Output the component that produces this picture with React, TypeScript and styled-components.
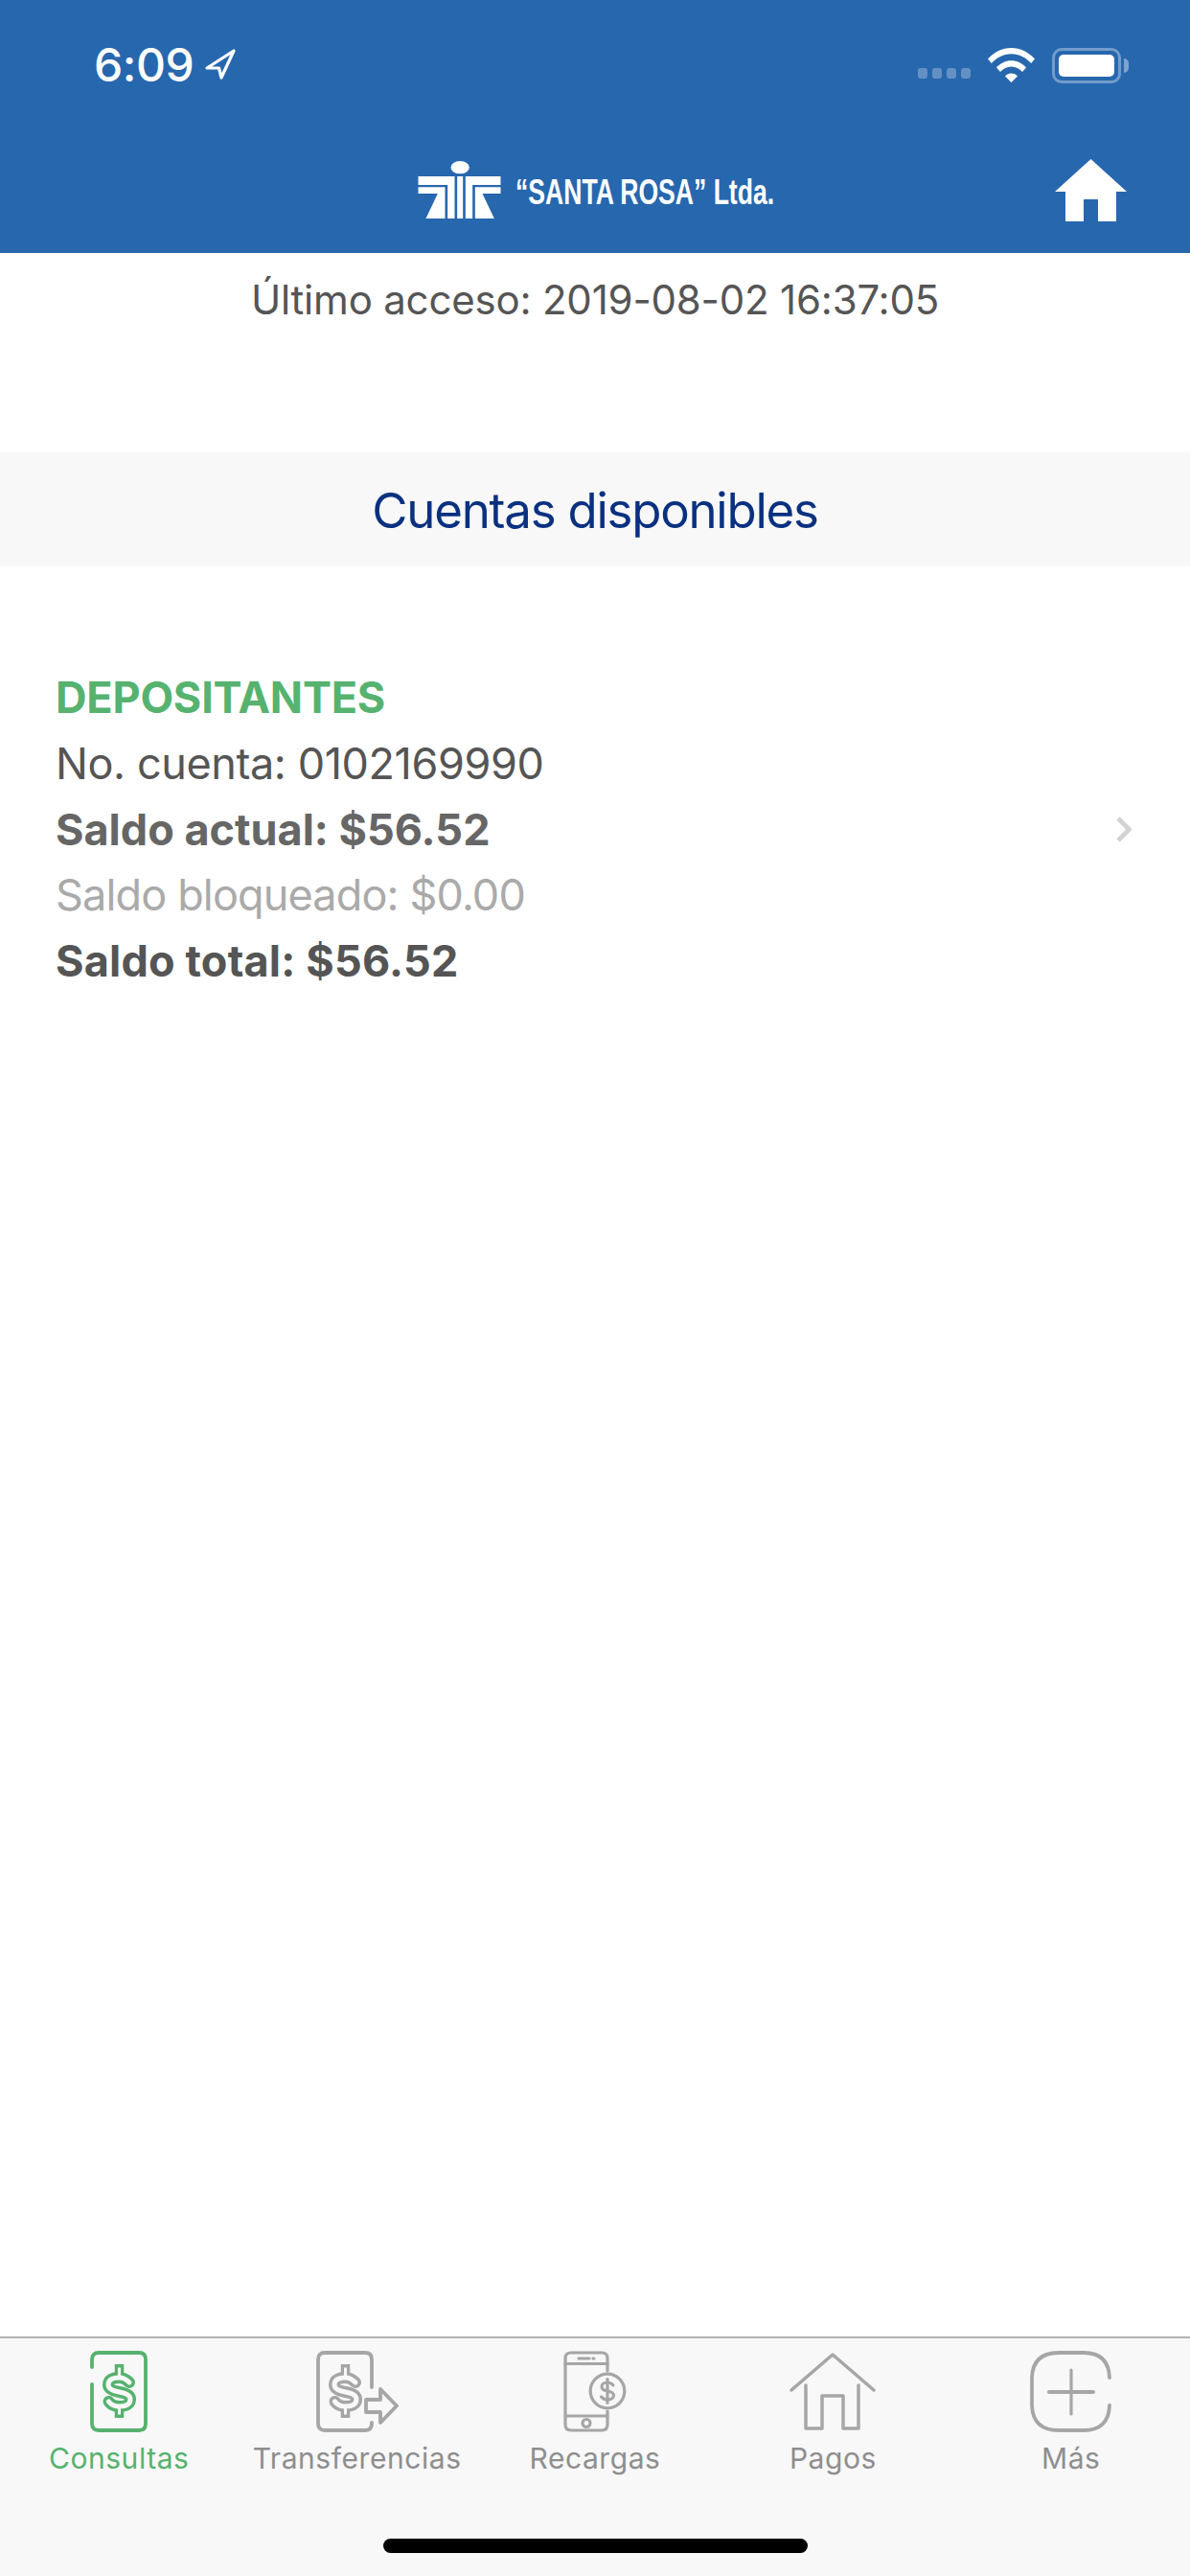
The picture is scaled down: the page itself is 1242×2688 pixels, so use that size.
import styled, { createGlobalStyle } from "styled-components";

const GREEN = "#56b26f";
const ICON_GRAY = "#a6a6a6";
const TAB_BG = "#f8f8f8";

const GlobalStyle = createGlobalStyle`
  html, body {
    margin: 0;
    padding: 0;
    background: #ffffff;
  }
  * {
    box-sizing: border-box;
  }
`;

const Screen = styled.div`
  width: 1242px;
  height: 2688px;
  display: flex;
  flex-direction: column;
  background: #ffffff;
  font-family: Inter, "Liberation Sans", sans-serif;
  overflow: hidden;
`;

const Header = styled.header`
  height: 264px;
  background: #2767ae;
  color: #ffffff;
`;

const StatusBar = styled.div`
  height: 136px;
  display: flex;
  align-items: center;
  justify-content: space-between;
  padding: 0 72px 0 98px;
`;

const StatusLeft = styled.div`
  display: flex;
  align-items: center;
  gap: 12px;
`;

const Time = styled.span`
  font-size: 48px;
  font-weight: 500;
  letter-spacing: -0.4px;
  line-height: 1;
`;

const StatusRight = styled.div`
  display: flex;
  align-items: center;
`;

const SignalDots = styled.div`
  display: flex;
  gap: 5px;
  margin: 16px 18px 0 0;
`;

const SignalDot = styled.span`
  width: 10px;
  height: 11px;
  border-radius: 3px;
  background: rgba(255, 255, 255, 0.28);
`;

const Battery = styled.div`
  width: 72px;
  height: 37px;
  margin-left: 18px;
  padding: 4px;
  border: 3px solid rgba(255, 255, 255, 0.35);
  border-radius: 10px;
  position: relative;

  &::before {
    content: "";
    display: block;
    width: 100%;
    height: 100%;
    border-radius: 5px;
    background: #ffffff;
  }

  &::after {
    content: "";
    position: absolute;
    right: -11px;
    top: 8px;
    width: 5px;
    height: 15px;
    border-radius: 0 5px 5px 0;
    background: rgba(255, 255, 255, 0.4);
  }
`;

const NavBar = styled.div`
  height: 128px;
  padding-bottom: 4px;
  display: grid;
  grid-template-columns: 1fr auto 1fr;
  align-items: center;
`;

const Logo = styled.div`
  grid-column: 2;
  display: flex;
  align-items: center;
  gap: 15px;
`;

// the logo wordmark is a condensed face, no narrow family is installed
const LogoText = styled.span`
  width: 268px;
  font-family: "Liberation Sans", sans-serif;
  font-size: 36px;
  font-weight: 700;
  line-height: 1;
  white-space: nowrap;
  margin-top: 6px;
  transform: scaleX(0.738);
  transform-origin: left center;
`;

const HomeButton = styled.div`
  grid-column: 3;
  justify-self: end;
  display: flex;
  margin-right: 66px;
`;

const LastAccess = styled.div`
  padding: 24px 0 134px;
  text-align: center;
  font-size: 42px;
  line-height: 50px;
  letter-spacing: -0.2px;
  color: #555555;
`;

const SectionBand = styled.div`
  height: 119px;
  padding-top: 2px;
  display: flex;
  align-items: center;
  justify-content: center;
  background: #f8f8f8;
  font-size: 51px;
  letter-spacing: -1.25px;
  color: #0a3180;
`;

const AccountRow = styled.div`
  padding: 103px 61px 0 58px;
  display: flex;
  align-items: center;
  justify-content: space-between;
`;

const AccountInfo = styled.div`
  display: flex;
  flex-direction: column;
`;

const AccountLine = styled.div<{ $color: string; $bold?: boolean; $tracking?: number }>`
  font-size: 45px;
  line-height: 68.8px;
  letter-spacing: ${({ $tracking }) => $tracking ?? 0}px;
  font-weight: ${({ $bold }) => ($bold ? 700 : 400)};
  color: ${({ $color }) => $color};
`;

const TabBar = styled.nav`
  margin-top: auto;
  height: 250px;
  border-top: 2px solid #b4b4b4;
  background: ${TAB_BG};
  display: flex;
  flex-direction: column;
`;

const TabList = styled.div`
  display: grid;
  grid-template-columns: repeat(5, 1fr);
  padding-top: 13px;
`;

const Tab = styled.div<{ $active?: boolean }>`
  display: flex;
  flex-direction: column;
  align-items: center;
  color: ${({ $active }) => ($active ? GREEN : "#8e8e8e")};
`;

const TabIcon = styled.svg`
  height: 85px;
  display: block;
`;

const TabLabel = styled.span`
  margin-top: 9px;
  font-size: 30px;
  line-height: 36px;
  letter-spacing: 0.55px;
`;

const HomeIndicator = styled.div`
  width: 443px;
  height: 15px;
  margin: 66px auto 0;
  border-radius: 8px;
  background: #000000;
`;

// outlined dollar sign, shared by the Consultas and Transferencias icons
const DollarSign = ({ color }: { color: string }) => {
  const s =
    "M41 33C38 30 34 28 30.500 28C24 28 19 30 19 35.500C19 40.500 25 42 30.500 43C36 44 42 45.500 42 50.500C42 56 37 58 30.500 58C26 58 22 56.500 19.500 53";
  return (
    <g fill="none">
      <path d="M30.5 14V28M30.5 58V70" stroke={color} strokeWidth="9.500" strokeLinecap="butt" />
      <path d={s} stroke={color} strokeWidth="12" strokeLinecap="round" />
      <path d="M30.5 17.500V28M30.5 58V66.500" stroke={TAB_BG} strokeWidth="3" strokeLinecap="butt" />
      <path d={s} stroke={TAB_BG} strokeWidth="5" strokeLinecap="round" />
    </g>
  );
};

const LocationArrow = () => (
  <svg width="32" height="32" viewBox="0 0 32 32" fill="none" style={{ marginTop: -2 }}>
    <path
      d="M2 20L30 2L17 30L14.5 20Z"
      stroke="#ffffff"
      strokeWidth="3.2"
      strokeLinejoin="round"
    />
  </svg>
);

const WifiIcon = () => (
  <svg width="49" height="36" viewBox="0 0 49 36" fill="#ffffff">
    <path d="M0 11.5C6.5 4.3 15 0 24.5 0S42.5 4.3 49 11.5L45.2 16C39.800 10 32.600 6.200 24.500 6.200S9.200 10 3.800 16Z" />
    <path d="M9 20.500C13 16 18.500 13.300 24.500 13.300S36 16 40 20.500L36 25C33 21.700 29 19.600 24.500 19.600S16 21.700 13 25Z" />
    <path d="M18 29.500C19.700 27.600 22 26.500 24.500 26.500S29.300 27.600 31 29.500L24.500 36Z" />
  </svg>
);

const HomeGlyph = () => (
  <svg width="75" height="65" viewBox="0 0 75 65" fill="#ffffff">
    <path d="M37.500 0L75 34H64V65H45V42H30V65H11V34H0Z" />
  </svg>
);

const SantaRosaMark = () => (
  <svg width="87" height="60" viewBox="21 25 258 180" fill="#ffffff">
    <ellipse cx="152" cy="45" rx="29" ry="20" />
    <rect x="143" y="73" width="18" height="132" />
    <path d="M21 73H135V205H113V100H21Z" />
    <path d="M21 107H105V205H45L82 127H21Z" />
    <path d="M279 73H169V205H191V100H279Z" />
    <path d="M279 107H199V205H259L222 127H279Z" />
  </svg>
);

const Chevron = () => (
  <svg width="16" height="27" viewBox="0 0 16 27" fill="none">
    <path d="M2 2L13.500 13.500L2 25" stroke="#d2d2d2" strokeWidth="4.600" />
  </svg>
);

const ConsultasIcon = () => (
  <TabIcon width="60" viewBox="0 0 60 85" fill="none" stroke={GREEN} strokeWidth="3.800" strokeLinecap="round">
    <path d="M2 17V9Q2 2 9 2H51Q58 2 58 9V76Q58 83 51 83H9Q2 83 2 76V35" />
    <DollarSign color={GREEN} />
  </TabIcon>
);

const TransferenciasIcon = () => (
  <TabIcon width="86" viewBox="0 0 86 85" fill="none" stroke={ICON_GRAY} strokeWidth="3.800" strokeLinecap="round" strokeLinejoin="round">
    <path d="M58 75V76Q58 83 51 83H9Q2 83 2 76V9Q2 2 9 2H51Q58 2 58 9V38" />
    <DollarSign color={ICON_GRAY} />
    <path d="M52 51H67V40L84 57.500L67 75V64H52Z" stroke={ICON_GRAY} />
  </TabIcon>
);

const RecargasIcon = () => (
  <TabIcon width="66" viewBox="0 0 66 85" fill="none" stroke={ICON_GRAY} strokeWidth="3.200" strokeLinecap="round">
    <path d="M46 21V8Q46 2 40 2H8Q2 2 2 8V77Q2 83 8 83H40Q46 83 46 77V63" />
    <path d="M2 13.500H46" />
    <path d="M2 68H46" />
    <path d="M16 8H27" />
    <path d="M31 8H32" />
    <circle cx="24" cy="75.500" r="4" />
    <circle cx="46" cy="42" r="17.800" />
    <path d="M52 36C50 33.500 47.500 33 46 33C42.500 33 40 35 40 37.500C40 40.500 43 41.500 46 42C49 42.500 52.500 43.500 52.500 46.500C52.500 49 50 51 46 51C44 51 41.500 50.500 39.500 48" />
    <path d="M46 29.500V54.500" />
  </TabIcon>
);

const PagosIcon = () => (
  <TabIcon width="90" viewBox="0 0 90 85" fill="none" stroke={ICON_GRAY} strokeWidth="3.500" strokeLinecap="round" strokeLinejoin="round">
    <path d="M2 41L45 4L88 41" />
    <path d="M17 36V81H34V47H56V81H72V36" />
  </TabIcon>
);

const MasIcon = () => (
  <TabIcon width="86" viewBox="0 0 86 85" fill="none" stroke={ICON_GRAY} strokeWidth="3.800" strokeLinecap="round">
    <path d="M83 28Q82 2 56 2H30Q3 2 2 28V57Q3 83 30 83H56Q82 83 83 57" />
    <path d="M20 43H66" strokeWidth="4" />
    <path d="M43 20V66" strokeWidth="3.200" />
  </TabIcon>
);

const tabs = [
  { label: "Consultas", icon: <ConsultasIcon />, active: true },
  { label: "Transferencias", icon: <TransferenciasIcon /> },
  { label: "Recargas", icon: <RecargasIcon /> },
  { label: "Pagos", icon: <PagosIcon /> },
  { label: "Más", icon: <MasIcon /> },
];

const App = () => {
  return (
    <Screen>
      <GlobalStyle />
      <Header>
        <StatusBar>
          <StatusLeft>
            <Time>6:09</Time>
            <LocationArrow />
          </StatusLeft>
          <StatusRight>
            <SignalDots>
              <SignalDot />
              <SignalDot />
              <SignalDot />
              <SignalDot />
            </SignalDots>
            <WifiIcon />
            <Battery />
          </StatusRight>
        </StatusBar>
        <NavBar>
          <Logo>
            <SantaRosaMark />
            <LogoText>“SANTA ROSA” Ltda.</LogoText>
          </Logo>
          <HomeButton>
            <HomeGlyph />
          </HomeButton>
        </NavBar>
      </Header>

      <LastAccess>Último acceso: 2019-08-02 16:37:05</LastAccess>
      <SectionBand>Cuentas disponibles</SectionBand>

      <AccountRow>
        <AccountInfo>
          <AccountLine $color={GREEN} $bold $tracking={-0.2}>DEPOSITANTES</AccountLine>
          <AccountLine $color="#555555" $tracking={-0.4}>No. cuenta: 0102169990</AccountLine>
          <AccountLine $color="#666666" $bold>Saldo actual: $56.52</AccountLine>
          <AccountLine $color="#aaaaaa" $tracking={-0.85}>Saldo bloqueado: $0.00</AccountLine>
          <AccountLine $color="#555555" $bold $tracking={0.2}>Saldo total: $56.52</AccountLine>
        </AccountInfo>
        <Chevron />
      </AccountRow>

      <TabBar>
        <TabList>
          {tabs.map((tab) => (
            <Tab key={tab.label} $active={tab.active}>
              {tab.icon}
              <TabLabel>{tab.label}</TabLabel>
            </Tab>
          ))}
        </TabList>
        <HomeIndicator />
      </TabBar>
    </Screen>
  );
};

export default App;
